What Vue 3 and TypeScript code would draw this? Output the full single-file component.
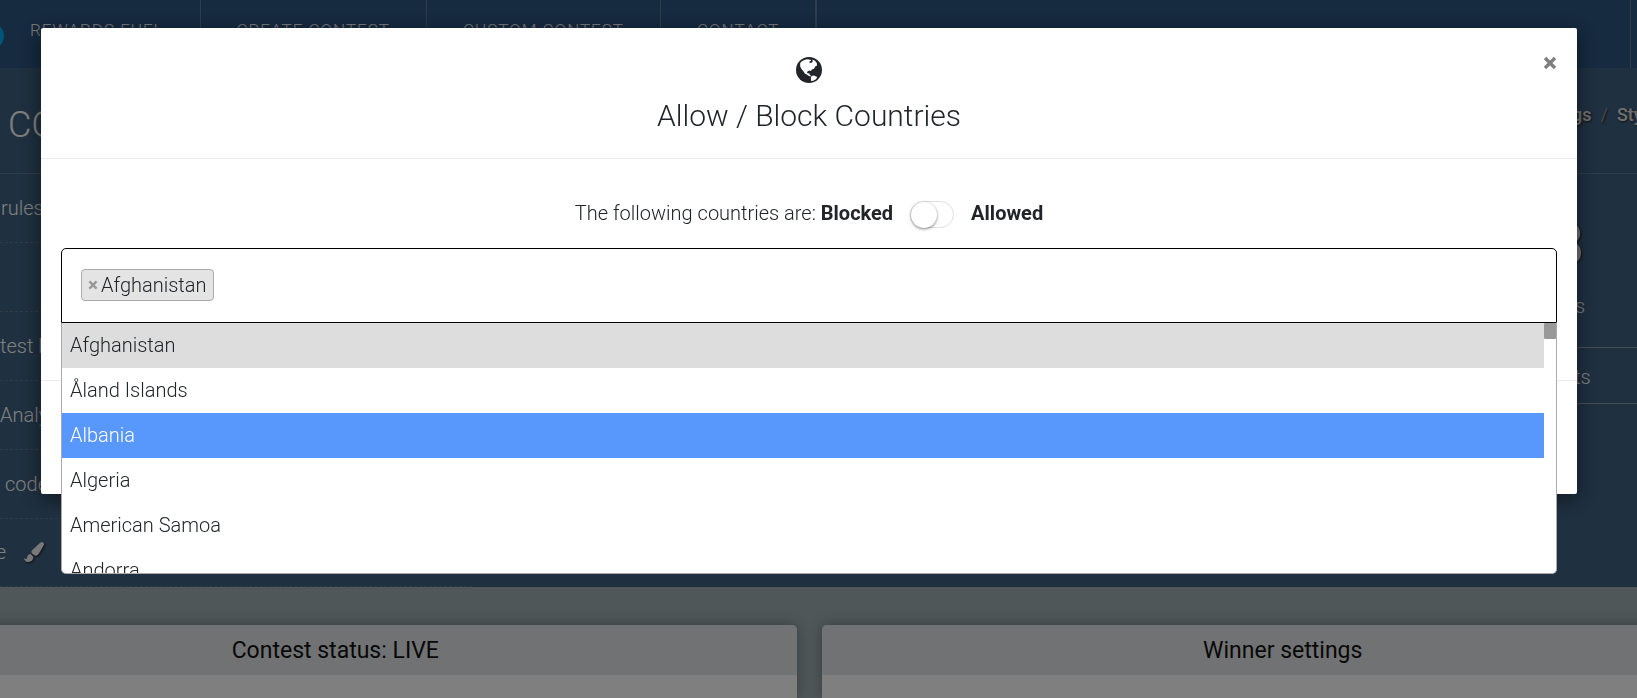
<script setup lang="ts">
import { ref } from 'vue'

interface Country {
  name: string
  selected?: boolean
}

const navLinks: string[] = ['Rewards Fuel', 'Create Contest', 'Custom Contest', 'Contact']
const tasks: string[] = ['rules', '', 'test la', 'Analy', 'code', 'e']
const countries: Country[] = [
  { name: 'Afghanistan', selected: true },
  { name: 'Åland Islands' },
  { name: 'Albania' },
  { name: 'Algeria' },
  { name: 'American Samoa' },
  { name: 'Andorra' },
]
const highlighted = ref('Albania')
const allowed = ref(false)
const query = ref('')
</script>

<template>
  <div class="page">
    <nav class="topbar">
      <span class="logo" aria-hidden="true"></span>
      <a v-for="(link, i) in navLinks" :key="link" href="#" :class="['nav-link', 'nav-' + i]">{{ link }}</a>
      <span class="nav-end"></span>
    </nav>

    <section class="hero">
      <header class="hero-head">
        <h1>CO</h1>
        <div class="crumbs">
          <a href="#">gs</a><span class="slash">/</span><a href="#">Sty</a>
        </div>
      </header>
      <div class="hero-body">
        <ul class="tasks">
          <li v-for="(task, i) in tasks" :key="i" :class="'task-' + i">
            <span>{{ task }}</span>
            <svg v-if="i === 5" class="brush" viewBox="0 0 512 512" aria-hidden="true">
              <path d="M167 309c-49 0-85 37-86 84-1 32-22 46-51 38-12-4-22-13-30-20 0 58 38 101 107 101 78 0 130-45 130-119 0-5-1-9-1-14zM458 0c-15 0-30 7-41 17C213 199 190 213 190 256c0 11 3 22 7 31l80 59c8 3 16 4 25 4 51 0 81-38 195-251 8-15 15-30 15-47 0-32-26-52-54-52z" />
            </svg>
          </li>
        </ul>
        <div class="stats">
          <div class="stat-main">
            <strong>8</strong>
            <span>s</span>
          </div>
          <div class="stat-row">ts</div>
        </div>
      </div>
    </section>

    <main class="cards">
      <section class="card"><h2>Contest status: LIVE</h2></section>
      <section class="card"><h2>Winner settings</h2></section>
    </main>
  </div>

  <div class="backdrop">
    <div class="modal" role="dialog" aria-modal="true" aria-labelledby="modal-title">
      <header class="modal-head">
        <button class="close" type="button" aria-label="Close">
          <svg viewBox="0 0 14 14"><path d="M2 2l10 10M12 2L2 12" /></svg>
        </button>
        <svg class="globe" viewBox="0 0 26 26" aria-hidden="true">
          <circle cx="13" cy="13" r="13" fill="#212529" />
          <path fill="#fff" d="M4.200 6C6 3.800 8.500 2.600 11 2.300L14.600 2.700L15.200 3.400L13.400 4.400L13.400 5.400L14.800 6L16.400 5.200L16.800 3.800L16 2.600L19 3.700L20.800 6L21 8.400L19.200 9.400L18.200 11.400L16 12.600L14.800 14L13.400 13.600L11.600 14.200L11 15.800L12 16.600L13.400 16.200L13.500 17.600L14.800 18.400L14.600 19.400L12.600 18.800L10.800 17.400L8.800 16.400L7.400 14.200L5.400 12L4.200 9.500Z" />
          <path fill="#fff" d="M15.600 19L18 18.500L21.200 20L20.200 22L17.800 23.600L15.300 24.300L14.800 21Z" />
        </svg>
        <h3 id="modal-title">Allow / Block Countries</h3>
      </header>

      <div class="modal-body">
        <div class="mode">
          <span>The following countries are: <b>Blocked</b></span>
          <input id="mode-switch" v-model="allowed" class="switch" type="checkbox" role="switch" />
          <label for="mode-switch">Allowed</label>
        </div>

        <div class="select">
          <div class="selection">
            <span class="chip">
              <button type="button" aria-label="Remove Afghanistan">
                <svg viewBox="0 0 14 14"><path d="M2 2l10 10M12 2L2 12" /></svg>
              </button>Afghanistan
            </span>
            <input v-model="query" class="search" type="text" aria-label="Search countries" />
          </div>
          <div class="dropdown">
            <ul role="listbox" aria-label="Countries">
              <li
                v-for="country in countries"
                :key="country.name"
                role="option"
                :aria-selected="!!country.selected"
                :class="{ selected: country.selected, active: country.name === highlighted }"
                @mouseenter="highlighted = country.name"
              >{{ country.name }}</li>
            </ul>
            <div class="track" aria-hidden="true"><div class="thumb"></div></div>
          </div>
        </div>
      </div>
      <footer class="modal-foot"></footer>
    </div>
  </div>
</template>

<style>
body {
  margin: 0;
  font-family: Roboto, "Liberation Sans", sans-serif;
}
</style>

<style scoped>
* {
  box-sizing: border-box;
}
ul {
  list-style: none;
  margin: 0;
  padding: 0;
}
h1, h2, h3 {
  margin: 0;
}
a {
  color: inherit;
  text-decoration: none;
}
.page {
  display: flex;
  flex-direction: column;
  height: 100vh;
  overflow: hidden;
  background: #9eaeb0;
  color: #fff;
  font-size: 20px;
  font-weight: 300;
}
.topbar {
  display: flex;
  flex: none;
  height: 68px;
  background: #2c5480;
}
.logo {
  flex: none;
  width: 28px;
  height: 28px;
  margin: 22px 0 0 -24px;
  border-radius: 50%;
  background: #00a8f4;
}
.nav-link {
  display: flex;
  align-items: center;
  height: 68px;
  padding: 0 36px 8px;
  border-right: 1px solid #5c7890;
  color: #f0f0f0;
  font-size: 17px;
  font-weight: 300;
  letter-spacing: 1px;
  text-transform: uppercase;
}
.nav-0 {
  padding-left: 26px;
}
.nav-3 {
  border-right-width: 2px;
}
.nav-end {
  width: 7px;
  margin-left: auto;
  border-left: 1px solid #5c7890;
}
.hero {
  flex: none;
  background: #3e6080;
}
.hero-head {
  display: flex;
  justify-content: space-between;
  height: 106px;
  padding-left: 8px;
  border-bottom: 1px solid #5e7990;
}
h1 {
  padding-top: 36px;
  font-size: 36px;
  line-height: 42px;
  font-weight: 300;
}
.crumbs {
  display: flex;
  gap: 9px;
  width: 65px;
  padding-top: 36px;
  color: #e0e0e0;
  font-size: 18px;
  line-height: 22px;
  font-weight: 500;
  text-shadow: 1px 1px 2px #222;
}
.slash {
  color: #8c8c8c;
  font-weight: 400;
}
.hero-body {
  display: flex;
  justify-content: space-between;
}
.tasks {
  width: 472px;
}
.tasks li {
  display: flex;
  align-items: center;
  gap: 18px;
  height: 69px;
  border-bottom: 1px dashed #5e7990;
}
.tasks .task-0 {
  padding-left: 1px;
}
.tasks .task-4 {
  padding-left: 5px;
}
.tasks .task-5 {
  height: 68px;
  padding-bottom: 2px;
}
.task-5 > span {
  width: 6px;
  direction: rtl;
}
.brush {
  width: 20px;
  height: 20px;
  fill: #f0f0f0;
  filter: drop-shadow(1px 1px 1px #222);
}
.stats {
  width: 90px;
}
.stat-main {
  display: flex;
  flex-direction: column;
  align-items: flex-start;
  height: 174px;
  padding: 38px 0 0 4px;
  border-bottom: 1px solid #8c9ca4;
}
.stat-main strong {
  color: #e0e0e0;
  font-size: 58px;
  line-height: 64px;
  font-weight: 500;
  text-shadow: 1px 1px 2px #222;
}
.stat-main span {
  padding: 18px 0 0 24px;
  line-height: 24px;
}
.stat-row {
  height: 56px;
  padding-left: 27px;
  border-bottom: 1px solid #8c9ca4;
  line-height: 58px;
}
.cards {
  display: grid;
  flex: 1;
  grid-template-columns: 1fr 1fr;
  gap: 25px;
  margin: 38px -107px 0 -126px;
}
.card {
  border-radius: 5px 5px 0 0;
  background: #fff;
  box-shadow: 0 0 14px rgba(0, 0, 0, 0.3);
}
.card h2 {
  height: 50px;
  border-radius: 5px 5px 0 0;
  background: #e2e4e6;
  color: #111;
  font-size: 23px;
  line-height: 52px;
  font-weight: 400;
  text-align: center;
}
.backdrop {
  position: fixed;
  inset: 0;
  padding: 28px 60px 0 41px;
  background: rgba(0, 0, 0, 0.5);
  color: #212529;
  font-size: 20px;
  font-weight: 300;
}
.modal {
  border-radius: 2px;
  background: #fff;
  box-shadow: 0 5px 20px rgba(0, 0, 0, 0.5);
}
.modal-head {
  position: relative;
  display: flex;
  flex-direction: column;
  align-items: center;
  height: 131px;
  padding-top: 29px;
  border-bottom: 1px solid #e9ecef;
}
.globe {
  width: 26px;
  height: 26px;
}
.modal-head h3 {
  margin-top: 13px;
  font-size: 30px;
  line-height: 40px;
  font-weight: 300;
}
button {
  padding: 0;
  border: 0;
  background: none;
  cursor: pointer;
}
button svg {
  display: block;
  width: 100%;
  fill: none;
  stroke: currentColor;
  stroke-width: 3.4;
}
.close {
  position: absolute;
  top: 28px;
  right: 20px;
  width: 14px;
  color: #7f7f7f;
}
.modal-body {
  height: 221px;
  padding: 39px 20px 0;
}
.mode {
  display: flex;
  align-items: center;
  justify-content: center;
  gap: 17px;
  height: 30px;
}
.mode b,
.mode label {
  font-weight: 700;
}
.switch {
  appearance: none;
  display: flex;
  align-items: center;
  width: 44px;
  height: 27px;
  margin: 3px 0 0;
  border: 1px solid #dfdfdf;
  border-radius: 14px;
  background: #fff;
}
.switch::before {
  content: "";
  width: 26px;
  height: 26px;
  border-radius: 50%;
  background: #fff;
  box-shadow: 0 1px 3px rgba(0, 0, 0, 0.5);
}
.switch:checked {
  justify-content: flex-end;
}
.select {
  position: relative;
  margin-top: 20px;
}
.selection {
  display: flex;
  height: 75px;
  padding: 20px 19px;
  border: 1px solid #000;
  border-radius: 5px 5px 0 0;
}
.chip {
  display: flex;
  align-items: center;
  gap: 3px;
  height: 32px;
  padding: 0 6px;
  border: 1px solid #aaa;
  border-radius: 4px;
  background: #e4e4e4;
}
.chip button {
  width: 10px;
  color: #999;
}
.search {
  flex: 1;
  min-width: 0;
  border: 0;
  outline: 0;
  background: none;
  font: inherit;
}
.dropdown {
  position: absolute;
  top: 100%;
  left: 0;
  right: 0;
  display: flex;
  height: 251px;
  overflow: hidden;
  border: 1px solid #aaa;
  border-top: 0;
  border-radius: 0 0 5px 5px;
  background: #fff;
}
.dropdown ul {
  flex: 1;
}
.dropdown li {
  height: 45px;
  padding: 0 8px;
  line-height: 44px;
}
.dropdown .selected {
  background: #ddd;
}
.dropdown .active {
  background: #5897fb;
  color: #fff;
}
.track {
  width: 12px;
}
.thumb {
  height: 16px;
  border-radius: 1px;
  background: #999;
}
.modal-foot {
  height: 114px;
  border-top: 1px solid #e9ecef;
}
</style>
